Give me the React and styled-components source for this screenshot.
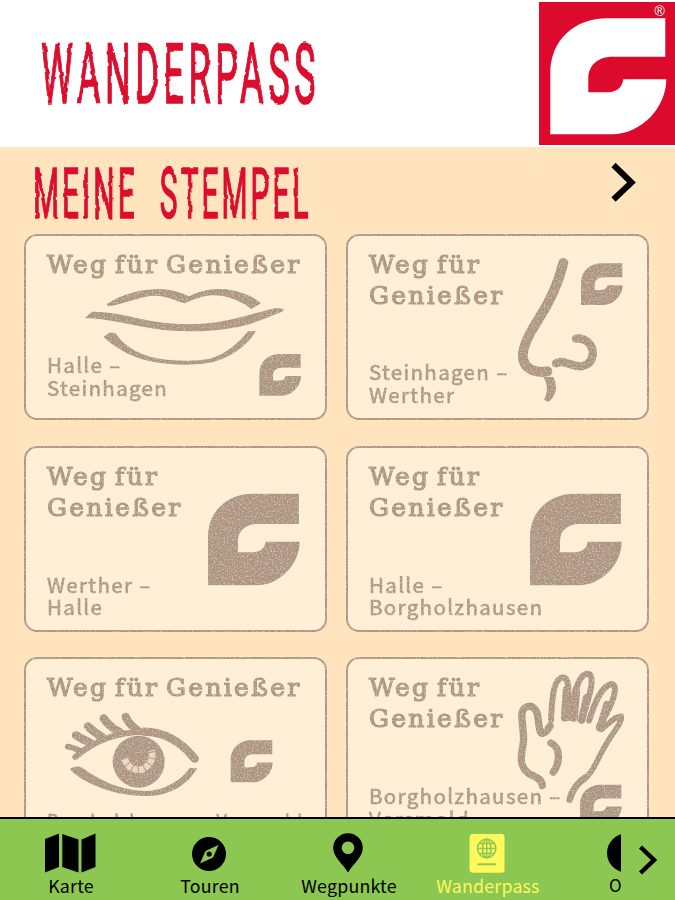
import React from 'react'
import styled, { createGlobalStyle } from 'styled-components'

const colors = {
    red: '#dc0a2d',
    sand: '#ffe4be',
    paper: '#ffefd7',
    ink: '#ab9482',
    green: '#8bc751',
    yellow: '#fff95c',
}

const GlobalStyle = createGlobalStyle`
    * {
        box-sizing: border-box;
    }
    body {
        margin: 0;
        background: ${colors.sand};
    }
`
const Page = styled.div`
    display: flex;
    flex-direction: column;
    width: 100%;
    height: 900px;
    overflow: hidden;
    background: ${colors.sand};
`
const Header = styled.header`
    display: flex;
    justify-content: space-between;
    flex: none;
    height: 147px;
    padding: 2px 0 0 41px;
    background: white;
`
const Brush = styled.div`
    filter: url(#rough);
    padding-top: ${props => props.$top}px;
`
const BrushText = styled.div`
    width: max-content;
    font-family: Roboto, "Liberation Sans", sans-serif;
    font-weight: 400;
    font-size: ${props => props.$size}px;
    line-height: 1;
    letter-spacing: ${props => props.$spacing}px;
    word-spacing: 28px;
    white-space: nowrap;
    color: ${colors.red};
    -webkit-text-stroke: 1.6px ${colors.red};
    transform: scaleX(${props => props.$squeeze});
    transform-origin: left top;
`
const TitleBox = styled.div`
    width: 300px;
`
const Logo = styled.svg`
    display: block;
    flex: none;
    width: 136px;
    height: 143px;
`
const Registered = styled.text`
    font-family: "Liberation Sans", sans-serif;
    font-size: 14px;
    fill: white;
`
const Content = styled.main`
    flex: 1;
    min-height: 0;
    overflow: hidden;
`
const SectionBar = styled.div`
    display: flex;
    justify-content: space-between;
    height: 87px;
    padding: 0 39px 0 33px;
`
const Arrow = styled.svg`
    display: block;
    flex: none;
    width: ${props => props.$width}px;
    height: ${props => props.$height}px;
    margin-top: ${props => props.$top}px;
    fill: none;
    stroke: black;
`
const StampGrid = styled.div`
    display: grid;
    grid-template-columns: 303px 303px;
    grid-auto-rows: 186px;
    gap: 25.7px 19px;
    padding-left: 24px;
`
const Card = styled.article`
    border-radius: 13px;
    background: ${colors.paper};
`
const Ink = styled.div`
    display: grid;
    width: 303px;
    height: 186px;
    border-radius: 13px;
    box-shadow: inset 0 0 0 2px ${colors.ink};
    color: ${colors.ink};
    filter: url(#grain);
`
const Art = styled.svg`
    grid-area: 1 / 1;
    width: 303px;
    height: 186px;
    fill: currentColor;
`
const Texts = styled.div`
    grid-area: 1 / 1;
    display: flex;
    flex-direction: column;
    justify-content: space-between;
    padding: 15px 0 ${props => props.$bottom}px 23px;
`
const StampTitle = styled.h3`
    margin: 0;
    font-family: "DejaVu Serif", serif;
    font-weight: 400;
    font-size: 25px;
    line-height: 31px;
    letter-spacing: 2.3px;
    word-spacing: -3.5px;
    white-space: pre-line;
    -webkit-text-stroke: 1.2px ${colors.ink};
`
const Route = styled.p`
    margin: 0;
    font-family: "Noto Sans CJK SC", "Noto Sans", sans-serif;
    font-size: ${props => (props.$small ? 18 : 20.5)}px;
    line-height: 22.5px;
    letter-spacing: ${props => (props.$small ? 0.9 : 1.35)}px;
    white-space: pre-line;
    -webkit-text-stroke: 0.6px ${colors.ink};
`
const Footer = styled.nav`
    display: flex;
    flex: none;
    height: 83px;
    border-top: 2px solid black;
    background: ${colors.green};
`
const NavList = styled.div`
    display: flex;
    width: 621px;
    padding-left: 1px;
    overflow: hidden;
`
const NavItem = styled.div`
    display: flex;
    flex-direction: column;
    align-items: center;
    flex: none;
    width: 139px;
    padding-top: 14px;
    color: ${props => (props.$active ? colors.yellow : 'black')};
`
const NavIcon = styled.svg`
    display: block;
    width: 51px;
    height: 40px;
    fill: currentColor;
`
const NavLabel = styled.span`
    width: ${props => (props.$cut ? '37px' : 'auto')};
    padding-left: 1px;
    font-family: "Noto Sans CJK SC", "Noto Sans", sans-serif;
    font-size: ${props => (props.$cut ? 17 : 17.8)}px;
    line-height: 24px;
    letter-spacing: 0.2px;
`

const Emblem = ({ x, y, size }) => (
    <path
        transform={`translate(${x} ${y}) scale(${size / 116})`}
        d="M0 116V55C0 22 24 0 57 0H115V38.5H62C48 38.5 38 47 38 60V74H58C66 74 72 69 73 61H116C116 90 90 116 62 116Z"
    />
)

const Mouth = () => (
    <>
        <path d="M260 222C310 190 370 176 420 177C455 178 485 188 507 199C535 184 570 176 605 177C650 179 695 195 723 220L694 237C655 207 610 195 575 196C550 197 515 210 494 220C470 213 445 200 410 197C365 196 315 222 264 229Z" />
        <path d="M195 264L215 245C260 244 310 254 360 266C420 280 480 284 540 282C630 278 710 245 770 234L793 237L785 246C740 262 700 284 640 293C570 306 500 306 430 300C350 290 260 264 195 264Z" />
        <path d="M251 320L268 308L286 309C310 346 355 374 410 385C460 394 530 394 570 386C620 372 655 338 684 304L708 303C680 350 625 388 565 399C490 410 395 404 335 376C300 360 272 342 251 320Z" />
        <Emblem x={718} y={372} size={125} />
    </>
)

const Nose = () => (
    <>
        <g fill="none" stroke="currentColor" strokeLinecap="round" strokeLinejoin="round">
            <path strokeWidth="30" d="M670 99C655 160 630 215 594 270C565 315 542 360 550 390C558 420 590 430 622 424" />
            <path strokeWidth="25" d="M648 400C675 385 695 415 728 408C765 400 766 355 742 335C730 326 720 324 708 326" />
        </g>
        <path d="M610 441L640 441C654 470 650 495 626 516L612 510C625 485 623 462 610 441Z" />
        <Emblem x={723} y={100} size={125} />
    </>
)

const BigEmblem = ({ x }) => <Emblem x={x} y={161} size={275} />

const Eye = () => (
    <>
        <g fill="none" stroke="currentColor" strokeLinecap="round">
            <path strokeWidth="18" d="M166 322C225 270 290 247 370 246" />
            <path strokeWidth="25" d="M370 246C440 246 490 285 524 327" />
            <path strokeWidth="25" d="M317 202C325 218 335 230 352 242M251 206C262 222 278 237 300 248M204 230C215 240 228 252 246 262M168 257C180 265 193 272 212 280" />
            <path strokeWidth="17" d="M143 291C156 293 168 298 182 304" />
        </g>
        <path d="M149 359C160 350 175 348 187 354C240 395 310 423 380 424C440 422 490 385 508 355L531 355C510 395 465 432 400 438C315 445 205 415 149 359Z" />
        <circle cx="356" cy="336" r="78" />
        <path fill="none" stroke="#ead5bf" strokeWidth="20" strokeDasharray="16 3" d="M314 328C328 366 365 368 384 347C397 334 398 318 395 302" />
        <Emblem x={632} y={272} size={126} />
    </>
)

const Hand = () => (
    <>
        <g fill="none" stroke="currentColor" strokeLinecap="round" strokeLinejoin="round">
            <path strokeWidth="22" d="M607 408C607 390 590 382 570 374C535 352 543 320 550 280C555 240 535 190 553 176C575 160 592 178 594 205C598 230 597 251 608 251C622 245 624 240 630 229" />
            <path strokeWidth="18" d="M633 212C637 160 636 100 662 85C687 78 688 100 682 205M691 205C698 150 709 80 741 72C765 70 756 125 724 213M747 213C765 155 785 111 813 103C840 105 818 165 777 230" />
            <path strokeWidth="23" d="M674 204L680 120M702 205L709 125M725 210L740 145M780 235L801 165" />
            <path strokeWidth="17" d="M784 239C806 225 822 199 844 200C845 225 817 248 795 290C770 330 760 370 730 390" />
            <path strokeWidth="20" d="M737 383C706 403 695 425 689 450" />
            <path strokeWidth="22" d="M633 280C665 295 658 344 640 367" />
        </g>
        <Emblem x={720} y={405} size={125} />
    </>
)

const stamps = [
    { title: 'Weg für Genießer', route: 'Halle –\nSteinhagen', origin: '12 12', bottom: 22, art: <Mouth /> },
    { title: 'Weg für\nGenießer', route: 'Steinhagen –\nWerther', origin: '18 12', bottom: 15, art: <Nose /> },
    { title: 'Weg für\nGenießer', route: 'Werther –\nHalle', origin: '12 18', bottom: 14, art: <BigEmblem x={564} /> },
    { title: 'Weg für\nGenießer', route: 'Halle –\nBorgholzhausen', origin: '18 18', bottom: 14, art: <BigEmblem x={570} /> },
    { title: 'Weg für Genießer', route: 'Borgholzhausen – Versmold', origin: '12 22', bottom: 12, small: true, art: <Eye /> },
    { title: 'Weg für\nGenießer', route: 'Borgholzhausen –\nVersmold', origin: '18 22', bottom: 14, art: <Hand /> },
]

const Stamp = ({ title, route, origin, bottom, small, art }) => (
    <Card>
        <Ink>
            <Art viewBox={`${origin} 909 558`}>{art}</Art>
            <Texts $bottom={bottom}>
                <StampTitle>{title}</StampTitle>
                <Route $small={small}>{route}</Route>
            </Texts>
        </Ink>
    </Card>
)

const navItems = [
    {
        label: 'Karte',
        icon: <path d="M0 6L14 0.5V34L0 39.5ZM17.3 1L33.5 6.5V39.5L17.3 34ZM36.5 6.5L50.5 0.5V34L36.5 39.5Z" />,
    },
    {
        label: 'Touren',
        icon: (
            <>
                <circle cx="25" cy="21" r="17" />
                <path fill={colors.green} d="M34.5 12L29 24.5L16 30.5L21.5 18Z" />
                <circle cx="25.2" cy="21" r="2.6" />
            </>
        ),
    },
    {
        label: 'Wegpunkte',
        icon: <path fillRule="evenodd" d="M25 0.3A14.8 14.8 0 0 0 10.2 15C10.2 24 20 31 25 39.5C30 31 39.8 24 39.8 15A14.8 14.8 0 0 0 25 0.3ZM25 8.5A6.3 6.3 0 1 1 25 21.1A6.3 6.3 0 1 1 25 8.5Z" />,
    },
    {
        label: 'Wanderpass',
        active: true,
        icon: (
            <>
                <path d="M11 1H40Q42.5 1 42.5 3.5V37Q42.5 39.7 40 39.7H11Q7.5 39.7 7.5 36V4.5Q7.5 1 11 1Z" />
                <g fill="none" stroke={colors.green} strokeWidth="1.5">
                    <circle cx="24.7" cy="15.5" r="9.2" />
                    <ellipse cx="24.7" cy="15.5" rx="4.2" ry="9.2" />
                    <path d="M15.5 15.5H34M17 10.5H32.4M17 20.5H32.4M24.7 6.3V24.7" />
                    <path strokeWidth="2" d="M15.5 31.3H34" />
                </g>
            </>
        ),
    },
    { label: 'O', cut: true, icon: <circle cx="25.5" cy="20" r="19.5" /> },
]

export default function App() {
    return (
        <Page>
            <GlobalStyle />
            <svg width="0" height="0" style={{ position: 'absolute' }}>
                <filter id="rough" x="-5%" y="-5%" width="110%" height="110%">
                    <feTurbulence type="fractalNoise" baseFrequency="0.09" numOctaves="2" seed="4" result="noise" />
                    <feDisplacementMap in="SourceGraphic" in2="noise" scale="2.6" xChannelSelector="R" yChannelSelector="G" />
                </filter>
                <filter id="grain" x="0" y="0" width="100%" height="100%" colorInterpolationFilters="sRGB">
                    <feTurbulence type="fractalNoise" baseFrequency="0.6" numOctaves="2" seed="8" />
                    <feColorMatrix values="0 0 0 0 0  0 0 0 0 0  0 0 0 0 0  1.5 0 0 0 0.2" result="speckle" />
                    <feComposite in="SourceGraphic" in2="speckle" operator="in" />
                </filter>
            </svg>
            <Header>
                <TitleBox>
                    <Brush $top={31}>
                        <BrushText $size={84} $squeeze={0.43} $spacing={10.5}>WANDERPASS</BrushText>
                    </Brush>
                </TitleBox>
                <Logo viewBox="0 0 136 143">
                    <rect width="136" height="143" fill={colors.red} />
                    <g fill="white">
                        <Emblem x={11.3} y={16.3} size={116} />
                    </g>
                    <Registered x="115.5" y="13.5">®</Registered>
                </Logo>
            </Header>
            <Content>
                <SectionBar>
                    <TitleBox>
                        <Brush $top={11}>
                            <BrushText $size={71} $squeeze={0.42} $spacing={7.3}>MEINE STEMPEL</BrushText>
                        </Brush>
                    </TitleBox>
                    <Arrow $width={25} $height={40} $top={15} viewBox="0 0 25 40">
                        <path strokeWidth="6" d="M2.5 3L20.5 20.5L2.5 37.5" />
                    </Arrow>
                </SectionBar>
                <StampGrid>
                    {stamps.map((stamp, i) => <Stamp key={i} {...stamp} />)}
                </StampGrid>
            </Content>
            <Footer>
                <NavList>
                    {navItems.map(item => (
                        <NavItem key={item.label} $active={item.active}>
                            <NavIcon viewBox="0 0 51 40">{item.icon}</NavIcon>
                            <NavLabel $cut={item.cut}>{item.label}</NavLabel>
                        </NavItem>
                    ))}
                </NavList>
                <Arrow $width={36} $height={30} $top={26} viewBox="0 0 36 30">
                    <path strokeWidth="4.5" d="M19.5 2L33 15L19.5 28" />
                </Arrow>
            </Footer>
        </Page>
    )
}
